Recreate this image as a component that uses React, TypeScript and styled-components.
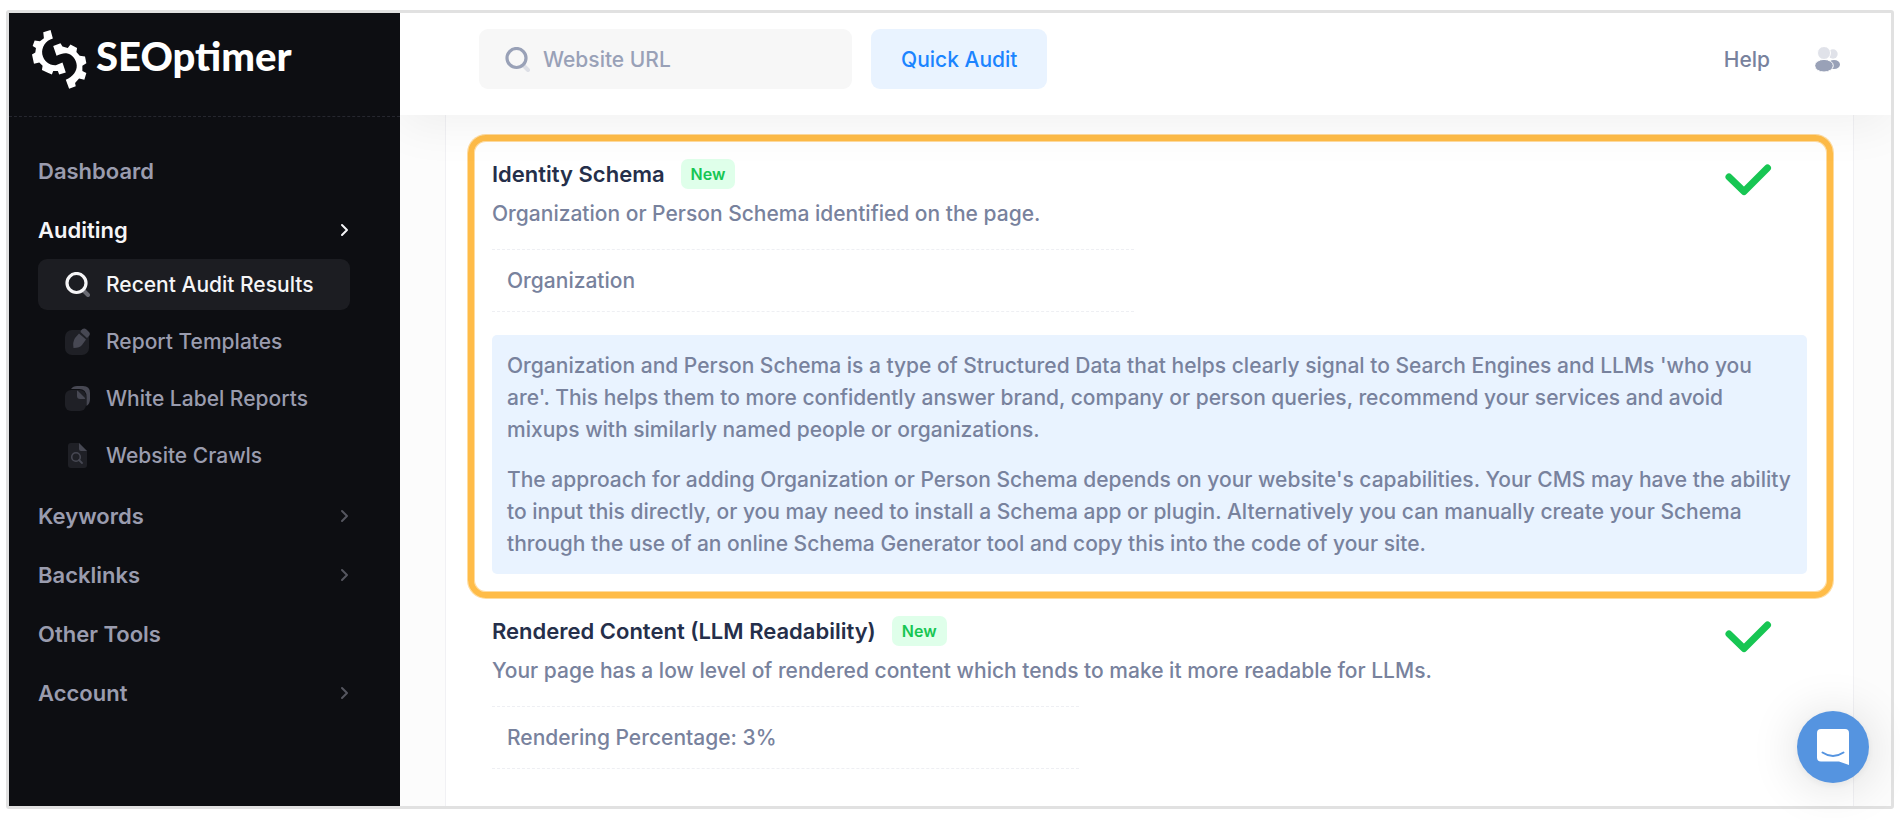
import React from "react";
import styled, { createGlobalStyle } from "styled-components";

const GlobalStyle = createGlobalStyle`
  *, *::before, *::after { box-sizing: border-box; }
  body { margin: 0; background: #fff; font-family: Inter, "Liberation Sans", sans-serif; font-size: 21px; font-weight: 500; color: #78829d; }
  h1, h2, p, ul { margin: 0; padding: 0; }
  ul { list-style: none; }
  a { color: inherit; text-decoration: none; }
  button, input { font: inherit; border: 0; }
`;

const Frame = styled.div`
  display: flex;
  min-height: calc(100vh - 21px);
  margin: 10px 6px 11px;
  border: 3px solid #e1e1e1;
  border-radius: 3px;
  overflow: hidden;
`;

const Sidebar = styled.aside`
  position: relative;
  z-index: 2;
  flex: 0 0 391px;
  background: #0d0e12;
`;

const Brand = styled.a`
  display: flex;
  gap: 8px;
  height: 104px;
  padding: 17px 22px 0;
  border-bottom: 1px dashed #26272f;
  color: #fff;
  font: 900 40px/52px Lato, sans-serif;
`;

const Nav = styled.nav`
  padding: 29px 50px 29px 29px;
`;

const NavList = styled.ul`
  display: flex;
  flex-direction: column;
  gap: 10px;
`;

const SubList = styled.ul`
  display: flex;
  flex-direction: column;
  gap: 6px;
  margin-top: 5px;
`;

const NavLink = styled.a<{ $active?: boolean }>`
  display: flex;
  align-items: center;
  justify-content: space-between;
  height: 49px;
  font-size: 22px;
  font-weight: 600;
  color: ${(p) => (p.$active ? "#f5f5f7" : "#9a9cae")};
  svg { color: ${(p) => (p.$active ? "#f5f5f7" : "#55565f")}; }
`;

const SubLink = styled.a<{ $active?: boolean }>`
  display: flex;
  align-items: center;
  gap: 16px;
  height: 51px;
  padding: 0 27px;
  border-radius: 9px;
  white-space: nowrap;
  background: ${(p) => (p.$active ? "#1c1d22" : "transparent")};
  color: ${(p) => (p.$active ? "#f5f5f7" : "#9a9cae")};
`;

const Page = styled.div`
  flex: 1;
  min-width: 0;
  display: flex;
  flex-direction: column;
  background: #fcfcfc;
`;

const Header = styled.header`
  position: relative;
  z-index: 1;
  display: flex;
  align-items: flex-start;
  height: 102px;
  padding: 16px 51px 0 79px;
  background: #fff;
  box-shadow: 0 10px 50px rgba(0, 0, 0, 0.06);
`;

const Search = styled.label`
  display: flex;
  align-items: center;
  gap: 13px;
  width: 373px;
  height: 60px;
  margin-right: 19px;
  padding: 0 26px;
  border-radius: 9px;
  background: #f7f7f7;
`;

const SearchInput = styled.input`
  flex: 1;
  min-width: 0;
  padding: 0;
  background: transparent;
  outline: none;
  color: #78829d;
  &::placeholder { color: #99a1b7; opacity: 1; }
`;

const AuditButton = styled.button`
  height: 60px;
  padding: 0 30px;
  border-radius: 9px;
  background: #e9f3ff;
  color: #1b84ff;
  white-space: nowrap;
`;

const HeaderLinks = styled.div`
  display: flex;
  align-items: center;
  gap: 45px;
  height: 60px;
  margin-left: auto;
`;

const IconButton = styled.button`
  display: flex;
  padding: 0;
  background: none;
`;

const Card = styled.main`
  flex: 1;
  margin: 0 37px 0 45px;
  padding: 19px 19px 0 21px;
  border: solid #f1f1f4;
  border-width: 0 1px;
  background: #fff;
`;

const Check = styled.section<{ $highlight?: boolean }>`
  padding: ${(p) => (p.$highlight ? "17px 20px 18px 18px" : "16px 20px 16px 18px")};
  margin: ${(p) => (p.$highlight ? "1px" : "0 7px")};
  border: ${(p) => (p.$highlight ? "6px solid #ffbc48" : "0")};
  border-radius: 18px;
  box-shadow: ${(p) => (p.$highlight ? "0 0 0 1px #ffdca0, inset 0 0 0 1px #ffdca0" : "none")};
`;

const CheckHead = styled.div`
  display: flex;
  align-items: flex-start;
  justify-content: space-between;
  padding-right: 35px;
`;

const Title = styled.h2`
  display: flex;
  align-items: center;
  gap: 16px;
  height: 32px;
  font-size: 22px;
  font-weight: 600;
  color: #252f4a;
`;

const Badge = styled.span`
  height: 30px;
  padding: 0 10px;
  border-radius: 7px;
  background: #dfffea;
  color: #17c653;
  font-size: 16px;
  font-weight: 600;
  line-height: 30px;
`;

const Text = styled.p`
  margin-top: 8px;
  line-height: 32px;
`;

const Result = styled.p<{ $width: number }>`
  max-width: ${(p) => p.$width}px;
  margin-top: 19px;
  padding: 15px 15px 14px;
  border: dashed #eeeff3;
  border-width: 1px 0;
  line-height: 32px;
`;

const Note = styled.div`
  display: flex;
  flex-direction: column;
  gap: 18px;
  margin-top: 23px;
  padding: 15px 14px 14px 15px;
  border-radius: 5px;
  background: #e9f3ff;
  line-height: 32px;
`;

const TickIcon = styled.svg`
  flex: none;
  margin-top: 5px;
`;

const ChatButton = styled.button`
  position: fixed;
  right: 31px;
  bottom: 37px;
  z-index: 3;
  display: grid;
  place-items: center;
  width: 72px;
  height: 72px;
  padding: 0;
  border-radius: 50%;
  background: #5594e0;
  box-shadow: 0 2px 8px rgba(0, 0, 0, 0.06), 0 3px 50px rgba(0, 0, 0, 0.14);
`;

const Gear = () => (
  <svg width="57" height="59" viewBox="96 90 170 178" fill="#fff" aria-hidden="true">
    <path d="M132 97L154 90L161 116C139 122 126 143 129 163C134 185 150 197 170 196L190 188L200 218L180 224L176 214L162 214L158 224L144 218L128 211L130 198L120 188L104 192L98 164L108 158L110 144L100 138L106 122L122 124L134 115Z" />
    <path d="M162 138L184 130L190 140L206 144L214 134L234 144L232 156L242 168L258 170L262 190L250 198L250 214L262 220L256 240L240 236L228 250L230 260L210 267L200 240C222 230 234 214 233 196C232 178 218 162 202 160C192 159 184 162 172 168Z" />
  </svg>
);

const Chevron = () => (
  <svg width="10" height="16" viewBox="0 0 10 16" fill="none" stroke="currentColor" strokeWidth="2" strokeLinecap="round" strokeLinejoin="round" aria-hidden="true">
    <path d="M2 3L7 8L2 13" />
  </svg>
);

const SearchIcon = ({ color, handle }: { color: string; handle: string }) => (
  <svg width="25" height="25" viewBox="0 0 25 25" fill="none" aria-hidden="true">
    <path d="M19 19L23 23" stroke={handle} strokeWidth="4" strokeLinecap="round" />
    <circle cx="11.5" cy="11" r="9.5" stroke={color} strokeWidth="3.2" />
  </svg>
);

const TemplateIcon = () => (
  <svg width="25" height="27" viewBox="0 0 25 27" aria-hidden="true">
    <rect y="2" width="24" height="25" rx="7" fill="#1f2026" />
    <path d="M16 2.500Q18.500-1 21.500 1.500L24 4Q26 6.500 23.500 8.500L22 10L15.500 4Z" fill="#474853" />
    <path d="M14 5.500L21 11.500L17 17Q15 20 8.500 20Q7.500 14 10 10Z" fill="#474853" />
  </svg>
);

const ReportIcon = () => (
  <svg width="25" height="25" viewBox="0 0 25 25" aria-hidden="true">
    <rect y="4" width="21" height="21" rx="6" fill="#1f2026" />
    <path d="M6 3Q8 0 12 0H18Q25 0 25 7V13Q25 18 21.500 20V11Q21.500 3 14 3Z" fill="#474853" />
    <path d="M12 5Q12 4 13 5L20 12Q20.500 13 19.500 13H15Q12 13 12 10Z" fill="#474853" />
  </svg>
);

const CrawlIcon = () => (
  <svg width="25" height="25" viewBox="0 0 25 25" aria-hidden="true">
    <path d="M6 0H14L22 8V22Q22 25 19 25H6Q3 25 3 22V3Q3 0 6 0Z" fill="#1f2026" />
    <path d="M14 0L22 8H16Q14 8 14 6Z" fill="#474853" />
    <circle cx="11" cy="14" r="4.300" fill="none" stroke="#474853" strokeWidth="1.600" />
    <path d="M14 17L17 20" stroke="#474853" strokeWidth="1.800" strokeLinecap="round" />
  </svg>
);

const UsersIcon = () => (
  <svg width="25" height="25" viewBox="0 0 25 25" aria-hidden="true">
    <circle cx="18" cy="7" r="4.700" fill="#e0e2e9" />
    <ellipse cx="19" cy="17.500" rx="6" ry="4.500" fill="#99a1b7" />
    <circle cx="9" cy="6" r="6.500" fill="#e0e2e9" stroke="#fff" />
    <ellipse cx="9" cy="18.700" rx="9.300" ry="6.300" fill="#99a1b7" stroke="#fff" />
  </svg>
);

const Tick = () => (
  <TickIcon width="48" height="34" viewBox="0 0 48 34" fill="none" stroke="#17c653" strokeWidth="7" strokeLinecap="round" strokeLinejoin="round" role="img" aria-label="Passed">
    <path d="M5 14L20 28.500L43.500 5" />
  </TickIcon>
);

const ChatIcon = () => (
  <svg width="32" height="36" viewBox="0 0 32 36" fill="none" aria-hidden="true">
    <path d="M4 0H28Q32 0 32 4V36L22 32.500H4Q0 32.500 0 28.500V4Q0 0 4 0Z" fill="#fff" />
    <path d="M5.500 23.500Q16 30.500 26.500 23.500" stroke="#5594e0" strokeWidth="2" strokeLinecap="round" />
  </svg>
);

const auditingPages = [
  { label: "Recent Audit Results", icon: <SearchIcon color="#f5f5f7" handle="#6a6b73" />, active: true },
  { label: "Report Templates", icon: <TemplateIcon /> },
  { label: "White Label Reports", icon: <ReportIcon /> },
  { label: "Website Crawls", icon: <CrawlIcon /> },
];

const sections = [
  { label: "Dashboard" },
  { label: "Auditing", arrow: true, active: true, pages: auditingPages },
  { label: "Keywords", arrow: true },
  { label: "Backlinks", arrow: true },
  { label: "Other Tools" },
  { label: "Account", arrow: true },
];

export default function App() {
  return (
    <>
      <GlobalStyle />
      <Frame>
        <Sidebar>
          <Brand href="#">
            <Gear />
            SEOptimer
          </Brand>
          <Nav>
            <NavList>
              {sections.map((s) => (
                <li key={s.label}>
                  <NavLink href="#" $active={s.active}>
                    {s.label}
                    {s.arrow && <Chevron />}
                  </NavLink>
                  {s.pages && (
                    <SubList>
                      {s.pages.map((p) => (
                        <li key={p.label}>
                          <SubLink href="#" $active={p.active}>
                            {p.icon}
                            {p.label}
                          </SubLink>
                        </li>
                      ))}
                    </SubList>
                  )}
                </li>
              ))}
            </NavList>
          </Nav>
        </Sidebar>
        <Page>
          <Header>
            <Search>
              <SearchIcon color="#99a1b7" handle="#dddfe6" />
              <SearchInput type="text" placeholder="Website URL" aria-label="Website URL" />
            </Search>
            <AuditButton type="button">Quick Audit</AuditButton>
            <HeaderLinks>
              <a href="#">Help</a>
              <IconButton type="button" aria-label="Account">
                <UsersIcon />
              </IconButton>
            </HeaderLinks>
          </Header>
          <Card>
            <Check $highlight>
              <CheckHead>
                <div>
                  <Title>
                    Identity Schema <Badge>New</Badge>
                  </Title>
                  <Text>Organization or Person Schema identified on the page.</Text>
                </div>
                <Tick />
              </CheckHead>
              <Result $width={642}>Organization</Result>
              <Note>
                <p>
                  Organization and Person Schema is a type of Structured Data that helps clearly signal to Search Engines
                  and LLMs 'who you are'. This helps them to more confidently answer brand, company or person queries,
                  recommend your services and avoid mixups with similarly named people or organizations.
                </p>
                <p>
                  The approach for adding Organization or Person Schema depends on your website's capabilities. Your CMS
                  may have the ability to input this directly, or you may need to install a Schema app or plugin.
                  Alternatively you can manually create your Schema through the use of an online Schema Generator tool
                  and copy this into the code of your site.
                </p>
              </Note>
            </Check>
            <Check>
              <CheckHead>
                <div>
                  <Title>
                    Rendered Content (LLM Readability) <Badge>New</Badge>
                  </Title>
                  <Text>Your page has a low level of rendered content which tends to make it more readable for LLMs.</Text>
                </div>
                <Tick />
              </CheckHead>
              <Result $width={587}>Rendering Percentage: 3%</Result>
            </Check>
          </Card>
        </Page>
      </Frame>
      <ChatButton type="button" aria-label="Open chat">
        <ChatIcon />
      </ChatButton>
    </>
  );
}
